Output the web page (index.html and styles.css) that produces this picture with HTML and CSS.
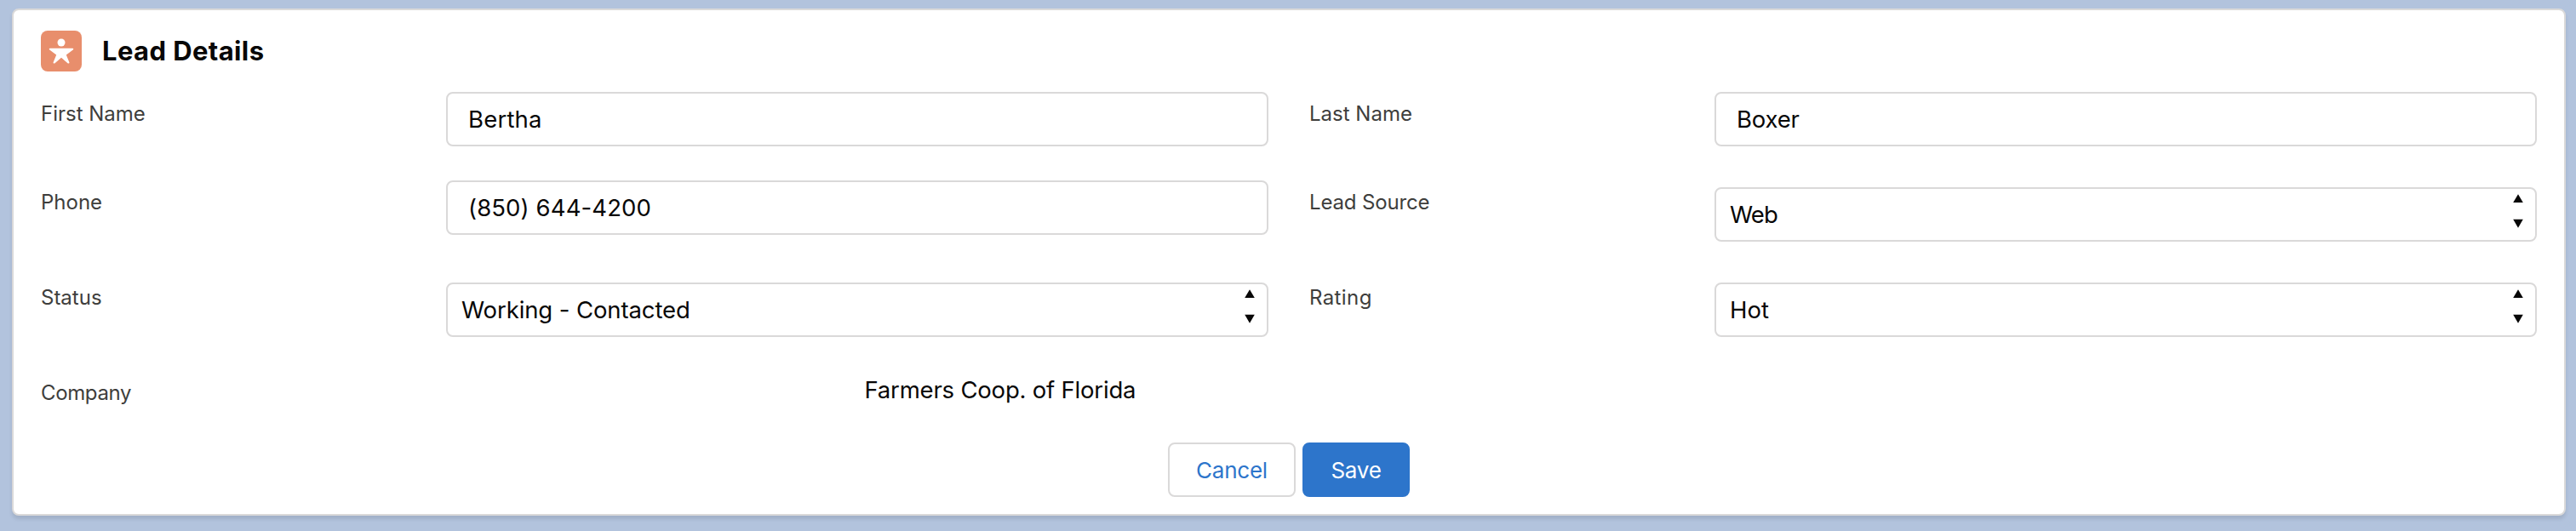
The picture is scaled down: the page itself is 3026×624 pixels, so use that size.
FILE: index.html
```
<!DOCTYPE html>
<html lang="en">
<head>
<meta charset="utf-8">
<title>Lead Details</title>
<link rel="stylesheet" href="styles.css">
</head>
<body>
<article class="card">
  <header class="card-header">
    <svg class="card-icon" viewBox="0 0 48 48" aria-hidden="true">
      <rect width="48" height="48" rx="8" fill="#e88e6c"/>
      <circle cx="24" cy="14" r="4.5" fill="#fff"/>
      <path d="M10.7 20.8H37.3C38.4 20.8 38.6 22 37.8 22.6L29.8 28.4L33.4 37.2C33.8 38.3 32.4 39.1 31.5 38.2L24 31.8L16.5 38.2C15.6 39.1 14.2 38.3 14.6 37.2L18.2 28.4L10.2 22.6C9.4 22 9.6 20.8 10.7 20.8Z" fill="#fff"/>
    </svg>
    <h1 class="card-title">Lead Details</h1>
  </header>

  <div class="form">
    <div class="label">First Name</div>
    <div class="field"><div class="box text first">Bertha</div></div>
    <div class="label second">Last Name</div>
    <div class="field"><div class="box text last">Boxer</div></div>

    <div class="label">Phone</div>
    <div class="field"><div class="box text phone">(850) 644-4200</div></div>
    <div class="label second source">Lead Source</div>
    <div class="field"><div class="box select">
      <span class="web">Web</span>
      <svg class="arrows" viewBox="0 0 12 40"><path d="M6 .2L11.8 10H.2ZM.2 29.8H11.8L6 39.8Z"/></svg>
    </div></div>

    <div class="label">Status</div>
    <div class="field"><div class="box select">
      <span class="working">Working - Contacted</span>
      <svg class="arrows" viewBox="0 0 12 40"><path d="M6 .2L11.8 10H.2ZM.2 29.8H11.8L6 39.8Z"/></svg>
    </div></div>
    <div class="label second rating">Rating</div>
    <div class="field"><div class="box select">
      <span>Hot</span>
      <svg class="arrows" viewBox="0 0 12 40"><path d="M6 .2L11.8 10H.2ZM.2 29.8H11.8L6 39.8Z"/></svg>
    </div></div>

    <div class="label company">Company</div>
    <div class="static">Farmers Coop. of Florida</div>
  </div>

  <footer class="actions">
    <button class="button neutral" type="button">Cancel</button>
    <button class="button brand" type="button">Save</button>
  </footer>
</article>
</body>
</html>
```
FILE: styles.css
```
* {
  box-sizing: border-box;
}

body {
  margin: 0;
  padding: 10px 12px 18px 14px;
  height: 624px;
  background: #b2c3dd;
  color: #080707;
  font-family: Inter, "Liberation Sans", sans-serif;
  font-size: 27.5px;
}

.card {
  height: 596px;
  padding: 24px 32px 0;
  border: 2px solid #dad9d9;
  border-radius: 8px;
  background: #fff;
  box-shadow: 0 4px 4px rgba(0, 0, 0, 0.1);
}

.card-header {
  display: flex;
  align-items: center;
  gap: 24px;
  height: 48px;
}

.card-icon {
  width: 48px;
  height: 48px;
}

.card-title {
  margin: 0;
  font-size: 31px;
  font-weight: 700;
  line-height: 48px;
  letter-spacing: 0.39px;
}

.form {
  display: grid;
  grid-template-columns: 476px 966px 524px 966px;
  row-gap: 40px;
  margin-top: 24px;
}

.label {
  padding-top: 8px;
  color: #3e3e3c;
  font-size: 24px;
  line-height: 36px;
}

.second {
  padding-left: 48px;
}

.source {
  letter-spacing: -0.15px;
}

.rating {
  letter-spacing: 0.4px;
}

.company {
  letter-spacing: -0.36px;
}

.box {
  display: flex;
  align-items: center;
  height: 64px;
  border: 2px solid #dad9d9;
  border-radius: 8px;
  background: #fff;
  line-height: 40px;
}

.text {
  padding: 0 24px;
}

.select {
  justify-content: space-between;
  margin-top: 8px;
  padding: 0 14px 0 16px;
}

.first {
  letter-spacing: 0.2px;
}

.last {
  letter-spacing: -0.2px;
}

.phone {
  letter-spacing: 0.12px;
}

.working {
  letter-spacing: -0.1px;
}

.web {
  letter-spacing: -0.9px;
}

.arrows {
  align-self: flex-start;
  width: 12px;
  height: 40px;
  margin-top: 6px;
  fill: #080707;
}

.static {
  padding-left: 491.5px;
  line-height: 44px;
  letter-spacing: -0.2px;
}

.actions {
  display: flex;
  justify-content: center;
  gap: 8px;
  margin-top: 40px;
}

.button {
  height: 64px;
  padding: 1px 0 0;
  border: 2px solid #dad9d9;
  border-radius: 8px;
  font-family: inherit;
  font-size: 26px;
  line-height: 40px;
  letter-spacing: -0.23px;
}

.neutral {
  width: 150px;
  background: #fff;
  color: #2d75cb;
}

.brand {
  width: 126px;
  border-color: #2d75cb;
  background: #2d75cb;
  color: #fff;
}
```
